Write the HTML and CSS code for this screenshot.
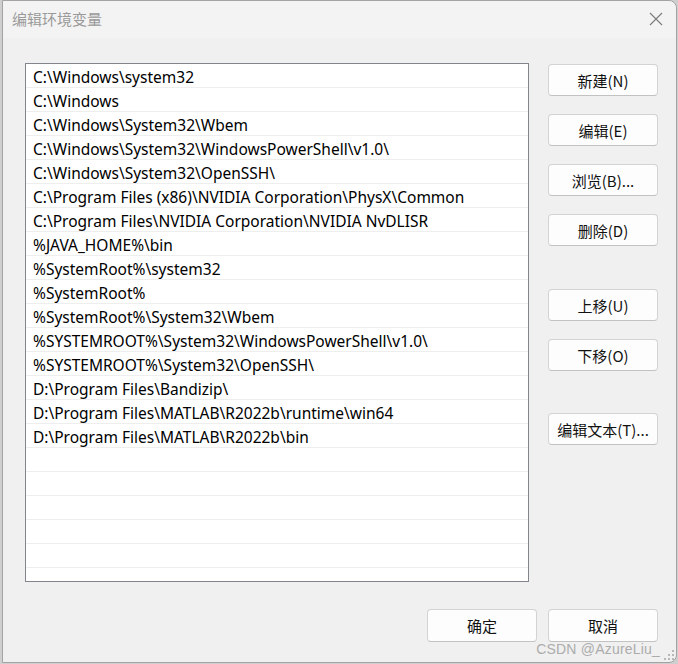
FILE: index.html
```html
<!DOCTYPE html>
<html lang="zh-CN">
<head>
<meta charset="utf-8">
<title>编辑环境变量</title>
<link rel="stylesheet" href="styles.css">
</head>
<body>
<div class="window">
  <div class="titlebar">
    <span class="title">编辑环境变量</span>
    <svg class="close" width="14" height="14" viewBox="0 0 14 14"><path d="M1 1 L13 13 M13 1 L1 13" stroke="#7a7a7a" stroke-width="1.1" fill="none"/></svg>
  </div>
  <div class="main">
    <div class="list">
      <div class="row">C:\Windows\system32</div>
      <div class="row">C:\Windows</div>
      <div class="row">C:\Windows\System32\Wbem</div>
      <div class="row">C:\Windows\System32\WindowsPowerShell\v1.0\</div>
      <div class="row">C:\Windows\System32\OpenSSH\</div>
      <div class="row">C:\Program Files (x86)\NVIDIA Corporation\PhysX\Common</div>
      <div class="row">C:\Program Files\NVIDIA Corporation\NVIDIA NvDLISR</div>
      <div class="row">%JAVA_HOME%\bin</div>
      <div class="row">%SystemRoot%\system32</div>
      <div class="row">%SystemRoot%</div>
      <div class="row">%SystemRoot%\System32\Wbem</div>
      <div class="row">%SYSTEMROOT%\System32\WindowsPowerShell\v1.0\</div>
      <div class="row">%SYSTEMROOT%\System32\OpenSSH\</div>
      <div class="row">D:\Program Files\Bandizip\</div>
      <div class="row">D:\Program Files\MATLAB\R2022b\runtime\win64</div>
      <div class="row">D:\Program Files\MATLAB\R2022b\bin</div>
      <div class="row"></div>
      <div class="row"></div>
      <div class="row"></div>
      <div class="row"></div>
      <div class="row"></div>
      <div class="row last"></div>
    </div>
    <div class="side">
      <button class="btn">新建(N)</button>
      <button class="btn">编辑(E)</button>
      <button class="btn">浏览(B)...</button>
      <button class="btn">删除(D)</button>
      <button class="btn group2">上移(U)</button>
      <button class="btn">下移(O)</button>
      <button class="btn group3">编辑文本(T)...</button>
    </div>
  </div>
  <div class="footer">
    <button class="btn">确定</button>
    <button class="btn">取消</button>
  </div>
  <div class="watermark">CSDN @AzureLiu_</div>
  <svg class="grip" width="10" height="10" viewBox="0 0 10 10">
    <rect x="8" y="0" width="2" height="2" fill="#b8b8b8"/>
    <rect x="4" y="4" width="2" height="2" fill="#b8b8b8"/>
    <rect x="8" y="4" width="2" height="2" fill="#b8b8b8"/>
    <rect x="0" y="8" width="2" height="2" fill="#b8b8b8"/>
    <rect x="4" y="8" width="2" height="2" fill="#b8b8b8"/>
    <rect x="8" y="8" width="2" height="2" fill="#b8b8b8"/>
  </svg>
</div>
</body>
</html>
```
FILE: styles.css
```css
html, body {
  margin: 0;
  padding: 0;
}
body {
  background: #cfcfcf;
  width: 678px;
  height: 664px;
  overflow: hidden;
  font-family: "Noto Sans", "Noto Sans CJK SC", sans-serif;
}
.window {
  position: relative;
  margin-left: 2px;
  width: 673px;
  height: 661px;
  background: #f0f0f0;
  border: 1px solid #a3a3a3;
  border-radius: 0 8px 8px 0;
  display: flex;
  flex-direction: column;
}
.titlebar {
  height: 37px;
  background: #f3f3f3;
  display: flex;
  align-items: center;
  justify-content: space-between;
  padding: 0 13px 0 9px;
  border-radius: 0 8px 0 0;
}
.title {
  font-size: 15px;
  color: #9a9a9a;
  font-family: "Noto Sans CJK SC", sans-serif;
  margin-top: -3px;
}
.close {
  display: block;
  margin-top: -2px;
}
.main {
  display: flex;
  padding: 25px 0 0 22px;
}
.list {
  width: 502px;
  height: 517px;
  border: 1px solid #82858c;
  background: #fff;
  overflow: hidden;
}
.row {
  height: 23px;
  border-bottom: 1px solid #eeeeee;
  padding-left: 7px;
  font-size: 15.5px;
  line-height: 26px;
  color: #000;
  white-space: nowrap;
}
.side {
  display: flex;
  flex-direction: column;
  margin-left: 19px;
  padding-top: 1px;
  gap: 18px;
}
.btn {
  width: 110px;
  height: 32px;
  background: #fdfdfd;
  border: 1px solid #d3d3d3;
  border-bottom-color: #c2c2c2;
  border-radius: 4px;
  font-family: "Noto Sans CJK SC", sans-serif;
  font-size: 15px;
  color: #111;
  padding: 0;
  margin: 0;
}
.group2 {
  margin-top: 25px;
}
.group3 {
  margin-top: 24px;
}
.footer {
  display: flex;
  justify-content: flex-end;
  gap: 11px;
  padding: 27px 18px 0 0;
}
.footer .btn {
  height: 33px;
}
.watermark {
  position: absolute;
  right: 16px;
  bottom: 5px;
  font-family: "Liberation Sans", sans-serif;
  font-size: 14px;
  letter-spacing: 0.2px;
  color: #acacac;
}
.grip {
  position: absolute;
  right: 2px;
  bottom: 2px;
}
```
